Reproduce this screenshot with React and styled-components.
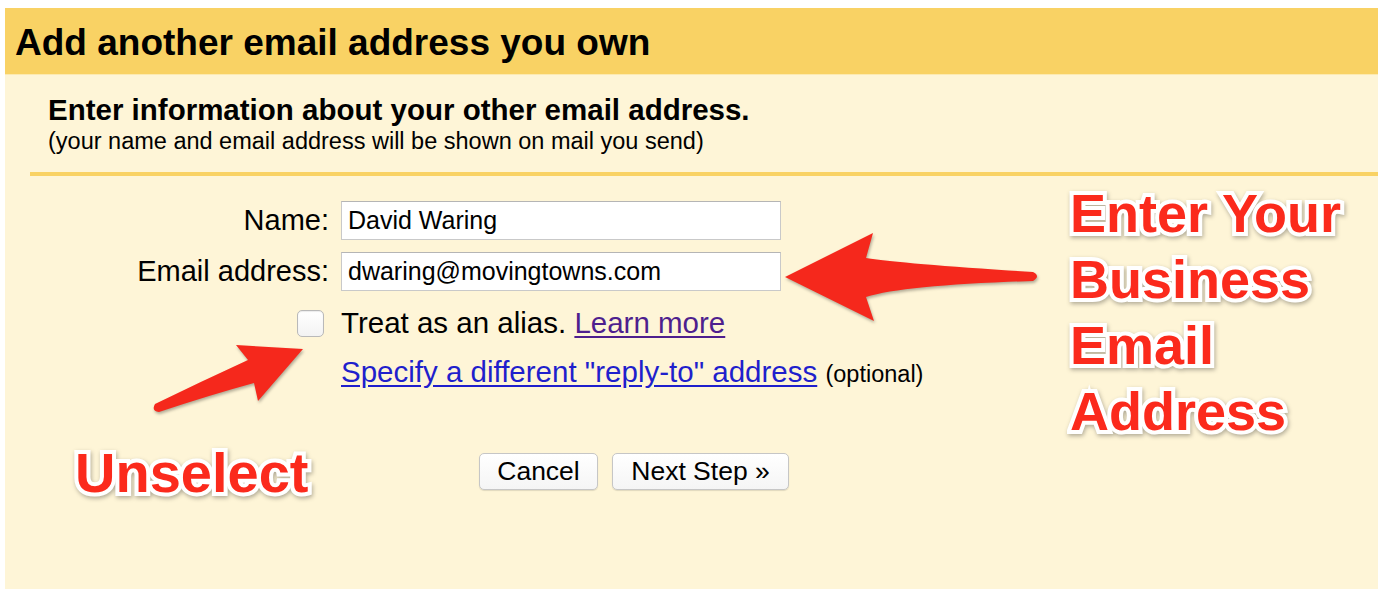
import React from "react";
import styled, { createGlobalStyle } from "styled-components";

const GlobalStyle = createGlobalStyle`
  html, body {
    margin: 0;
    padding: 0;
    background: #ffffff;
  }
  body {
    font-family: "Liberation Sans", Arial, Helvetica, sans-serif;
    color: #000;
  }
`;

const Page = styled.div`
  position: relative;
  width: 1390px;
  height: 598px;
  padding: 8px 12px 9px 5px;
  box-sizing: border-box;
  overflow: hidden;
`;

const Card = styled.div`
  height: 100%;
  background: #fef5d7;
  display: flex;
  flex-direction: column;
`;

const Header = styled.div`
  height: 67px;
  box-sizing: border-box;
  background: #f9d264;
  border-bottom: 1px solid #fdeab0;
  display: flex;
  align-items: center;
  padding: 4px 0 0 10px;
  font-size: 37px;
  font-weight: bold;
`;

const Intro = styled.div`
  padding: 19px 0 0 43px;
`;

const IntroTitle = styled.div`
  font-size: 29.5px;
  font-weight: bold;
  line-height: 32px;
`;

const IntroNote = styled.div`
  font-size: 23.5px;
  line-height: 30px;
`;

const Divider = styled.div`
  height: 4px;
  background: #f9d264;
  margin: 16px 0 0 25px;
`;

const Form = styled.div`
  display: flex;
  flex-direction: column;
  padding-top: 25px;
`;

const Row = styled.div`
  display: flex;
  align-items: center;
  gap: 12px;
  margin-top: ${(p) => p.$gap || 0}px;
`;

const Label = styled.div`
  width: 324px;
  flex-shrink: 0;
  text-align: right;
  font-size: 29px;
  display: flex;
  justify-content: flex-end;
`;

const Input = styled.div`
  width: 440px;
  height: 39px;
  box-sizing: border-box;
  background: #ffffff;
  border: 1px solid #c9c9c9;
  border-top-color: #b5b5b5;
  display: flex;
  align-items: center;
  padding-left: 6px;
  font-size: 25px;
`;

const Checkbox = styled.div`
  width: 27px;
  height: 27px;
  box-sizing: border-box;
  margin-right: 5px;
  border: 1px solid #b9b9b9;
  border-radius: 5px;
  background: linear-gradient(#ffffff, #f3f3f3);
  box-shadow: inset 0 1px 1px rgba(0, 0, 0, 0.08);
`;

const Text = styled.span`
  font-size: ${(p) => p.$size || 29.5}px;
  line-height: 30px;
  white-space: nowrap;
`;

const Link = styled.a`
  color: ${(p) => (p.$visited ? "#4e1f8e" : "#1f1fcc")};
  text-decoration: underline;
  text-underline-offset: 3px;
  font-size: 29.5px;
  cursor: pointer;
`;

const Buttons = styled.div`
  display: flex;
  gap: 14px;
  margin: 64px 0 0 474px;
`;

const Button = styled.button`
  height: 37px;
  width: ${(p) => p.$w}px;
  box-sizing: border-box;
  border: 1px solid #c6c6c6;
  border-radius: 5px;
  background: linear-gradient(#ffffff, #f5f5f5);
  box-shadow: 0 1px 1px rgba(0, 0, 0, 0.12);
  font-family: "Liberation Sans", Arial, sans-serif;
  font-size: 26.5px;
  color: #000;
  padding: 0;
`;

const Callout = styled.div`
  position: absolute;
  left: ${(p) => p.$x}px;
  top: ${(p) => p.$y}px;
  font-family: "Liberation Sans", Arial, sans-serif;
  font-weight: bold;
  font-size: ${(p) => p.$size}px;
  line-height: 66px;
  color: #fb2a1c;
  -webkit-text-stroke: 8px #ffffff;
  paint-order: stroke fill;
  filter: drop-shadow(1px 2px 2px rgba(0, 0, 0, 0.3));
  white-space: nowrap;
`;

const ArrowLayer = styled.svg`
  position: absolute;
  left: 0;
  top: 0;
  pointer-events: none;
  filter: drop-shadow(1px 2px 1.5px rgba(0, 0, 0, 0.3));
`;

export default function App() {
  return (
    <>
      <GlobalStyle />
      <Page>
        <Card>
          <Header>Add another email address you own</Header>
          <Intro>
            <IntroTitle>Enter information about your other email address.</IntroTitle>
            <IntroNote>(your name and email address will be shown on mail you send)</IntroNote>
          </Intro>
          <Divider />
          <Form>
            <Row>
              <Label>Name:</Label>
              <Input>David Waring</Input>
            </Row>
            <Row $gap={12}>
              <Label>Email address:</Label>
              <Input>dwaring@movingtowns.com</Input>
            </Row>
            <Row $gap={17}>
              <Label>
                <Checkbox />
              </Label>
              <Text>
                Treat as an alias. <Link $visited>Learn more</Link>
              </Text>
            </Row>
            <Row $gap={19}>
              <Label />
              <Text>
                <Link>Specify a different "reply-to" address</Link>{" "}
                <Text $size={23.5}>(optional)</Text>
              </Text>
            </Row>
            <Buttons>
              <Button $w={119}>Cancel</Button>
              <Button $w={177}>Next Step »</Button>
            </Buttons>
          </Form>
        </Card>

        <ArrowLayer width="1390" height="598" viewBox="0 0 1390 598">
          <path
            fill="#f5281c"
            d="M785,277 L873,233 L866,258 Q905,264 1033,272 Q1041,276 1033,281 Q905,285 866,297 L874,321 Z"
          />
          <path
            fill="#f5281c"
            d="M303,349 L236,345 L248,360 Q200,382 155,404 Q151,411 159,412 Q210,395 254,383 L258,401 Z"
          />
        </ArrowLayer>

        <Callout $x={1070} $y={180} $size={54}>
          Enter Your
          <br />
          Business
          <br />
          Email
          <br />
          Address
        </Callout>
        <Callout $x={75} $y={440} $size={56}>
          Unselect
        </Callout>
      </Page>
    </>
  );
}
